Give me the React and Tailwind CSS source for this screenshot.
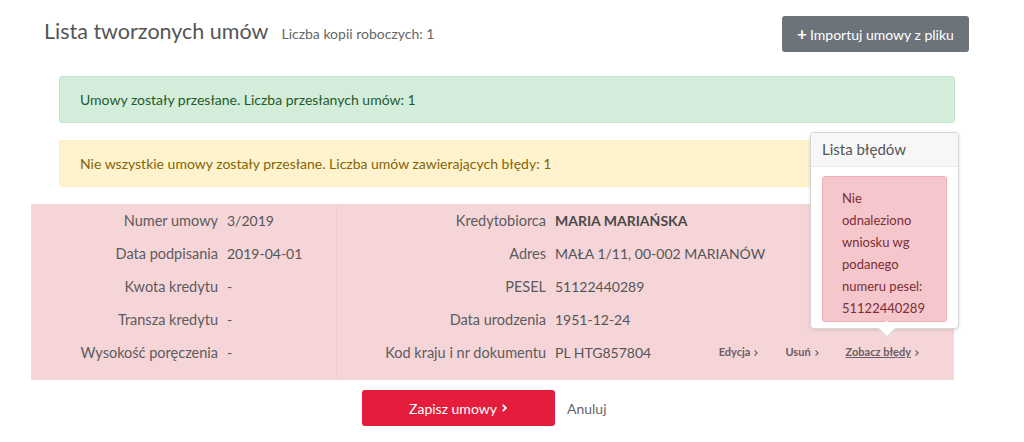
import React from 'react'

const leftRows = [
    ['Numer umowy', '3/2019'],
    ['Data podpisania', '2019-04-01'],
    ['Kwota kredytu', '-'],
    ['Transza kredytu', '-'],
    ['Wysokość poręczenia', '-'],
]

const rightRows = [
    ['Kredytobiorca', 'MARIA MARIAŃSKA', true],
    ['Adres', 'MAŁA 1/11, 00-002 MARIANÓW'],
    ['PESEL', '51122440289'],
    ['Data urodzenia', '1951-12-24'],
    ['Kod kraju i nr dokumentu', 'PL HTG857804'],
]

function Chevron({ className, width = 1.6 }) {
    return (
        <svg className={className} viewBox="0 0 8 10" fill="none" stroke="currentColor" strokeWidth={width}>
            <path d="M2 1.5l3.5 3.5L2 8.5" />
        </svg>
    )
}

export default function App() {
    return (
        <div className="relative w-[1024px] h-[442px] bg-white text-[#585858] font-['Lato','Open_Sans',sans-serif] overflow-hidden">
            {/* header */}
            <div className="flex items-center pl-[44px] pr-[55px] pt-[16px] h-[52px]">
                <h1 className="text-[21.5px] text-[#555] leading-none -mt-[5px]">Lista tworzonych umów</h1>
                <span className="ml-[13px] text-[14px] text-[#666] -mt-[2px]">Liczba kopii roboczych: 1</span>
                <button className="ml-auto h-[36px] w-[187px] rounded-[3px] bg-[#6c737a] text-white text-[14px] flex items-center justify-center gap-[3px]">
                    <span className="font-bold text-[17px] leading-none -mt-[1px]">+</span>
                    Importuj umowy z pliku
                </button>
            </div>

            {/* alerts */}
            <div className="ml-[59px] w-[896px] mt-[24px] flex flex-col gap-[17px]">
                <div className="h-[47px] flex items-center px-[20px] rounded-[3px] bg-[#d4edda] border border-[#c3e6cb] text-[#1f5a2c] text-[14px]">
                    Umowy zostały przesłane. Liczba przesłanych umów: 1
                </div>
                <div className="h-[47px] flex items-center px-[20px] rounded-[3px] bg-[#fff3cd] border border-[#ffeeba] text-[#856404] text-[14px]">
                    Nie wszystkie umowy zostały przesłane. Liczba umów zawierających błędy: 1
                </div>
            </div>

            {/* contract row */}
            <div className="ml-[31px] w-[923px] mt-[17px] h-[176px] bg-[#f5d5d8] flex text-[14px]">
                <div className="w-[306px] border-r border-[#efcdd0] flex flex-col">
                    {leftRows.map(([label, value]) => (
                        <div key={label} className="flex h-[33px] items-center">
                            <span className="w-[187px] text-right text-[14.5px] text-[#5c5c5c]">{label}</span>
                            <span className="ml-[9px] text-[#555]">{value}</span>
                        </div>
                    ))}
                </div>
                <div className="flex-1 flex flex-col">
                    {rightRows.map(([label, value, bold], i) => (
                        <div key={label} className="flex h-[33px] items-center">
                            <span className="w-[209px] text-right text-[14.5px] text-[#5c5c5c]">{label}</span>
                            <span className={`ml-[9px] ${bold ? 'font-bold text-[#4a4a4a]' : 'text-[#555]'}`}>{value}</span>
                            {i === 4 && (
                                <div className="ml-auto mr-[34px] flex items-center gap-[26px] text-[11px] font-bold text-[#6b5d63]">
                                    <span className="flex items-center gap-[3px]">Edycja <Chevron className="w-[6px] h-[8px]" /></span>
                                    <span className="flex items-center gap-[3px]">Usuń <Chevron className="w-[6px] h-[8px]" /></span>
                                    <span className="flex items-center gap-[3px] underline">Zobacz błędy <Chevron className="w-[6px] h-[8px]" /></span>
                                </div>
                            )}
                        </div>
                    ))}
                </div>
            </div>

            {/* footer buttons */}
            <div className="flex items-center ml-[362px] mt-[10px] gap-[12px]">
                <button className="w-[193px] h-[36px] rounded-[3px] bg-[#e31d3b] text-white text-[14px] flex items-center justify-center gap-[4px]">
                    Zapisz umowy <Chevron className="w-[7px] h-[10px]" width={2.2} />
                </button>
                <span className="text-[14px] text-[#666]">Anuluj</span>
            </div>

            {/* errors popover */}
            <div className="absolute left-[810px] top-[132px] w-[149px] h-[197px] bg-white border border-[#d6d6d6] rounded-[4px] shadow-[0_1px_4px_rgba(0,0,0,0.12)]">
                <div className="h-[34px] bg-[#f7f7f7] border-b border-[#ebebeb] rounded-t-[4px] flex items-center pl-[11px] text-[15px] text-[#555]">
                    Lista błędów
                </div>
                <div className="mx-[11px] mt-[9px] h-[146px] rounded-[3px] bg-[#f5c6cb] border border-[#f1b0b7] pl-[19px] pt-[10px] text-[13px] leading-[22px] text-[#7a2e35]">
                    Nie<br />odnaleziono<br />wniosku wg<br />podanego<br />numeru pesel:<br />51122440289
                </div>
                <div className="absolute left-[70px] -bottom-[7px] w-[12px] h-[12px] bg-white border-r border-b border-[#d6d6d6] rotate-45" />
            </div>
        </div>
    )
}
